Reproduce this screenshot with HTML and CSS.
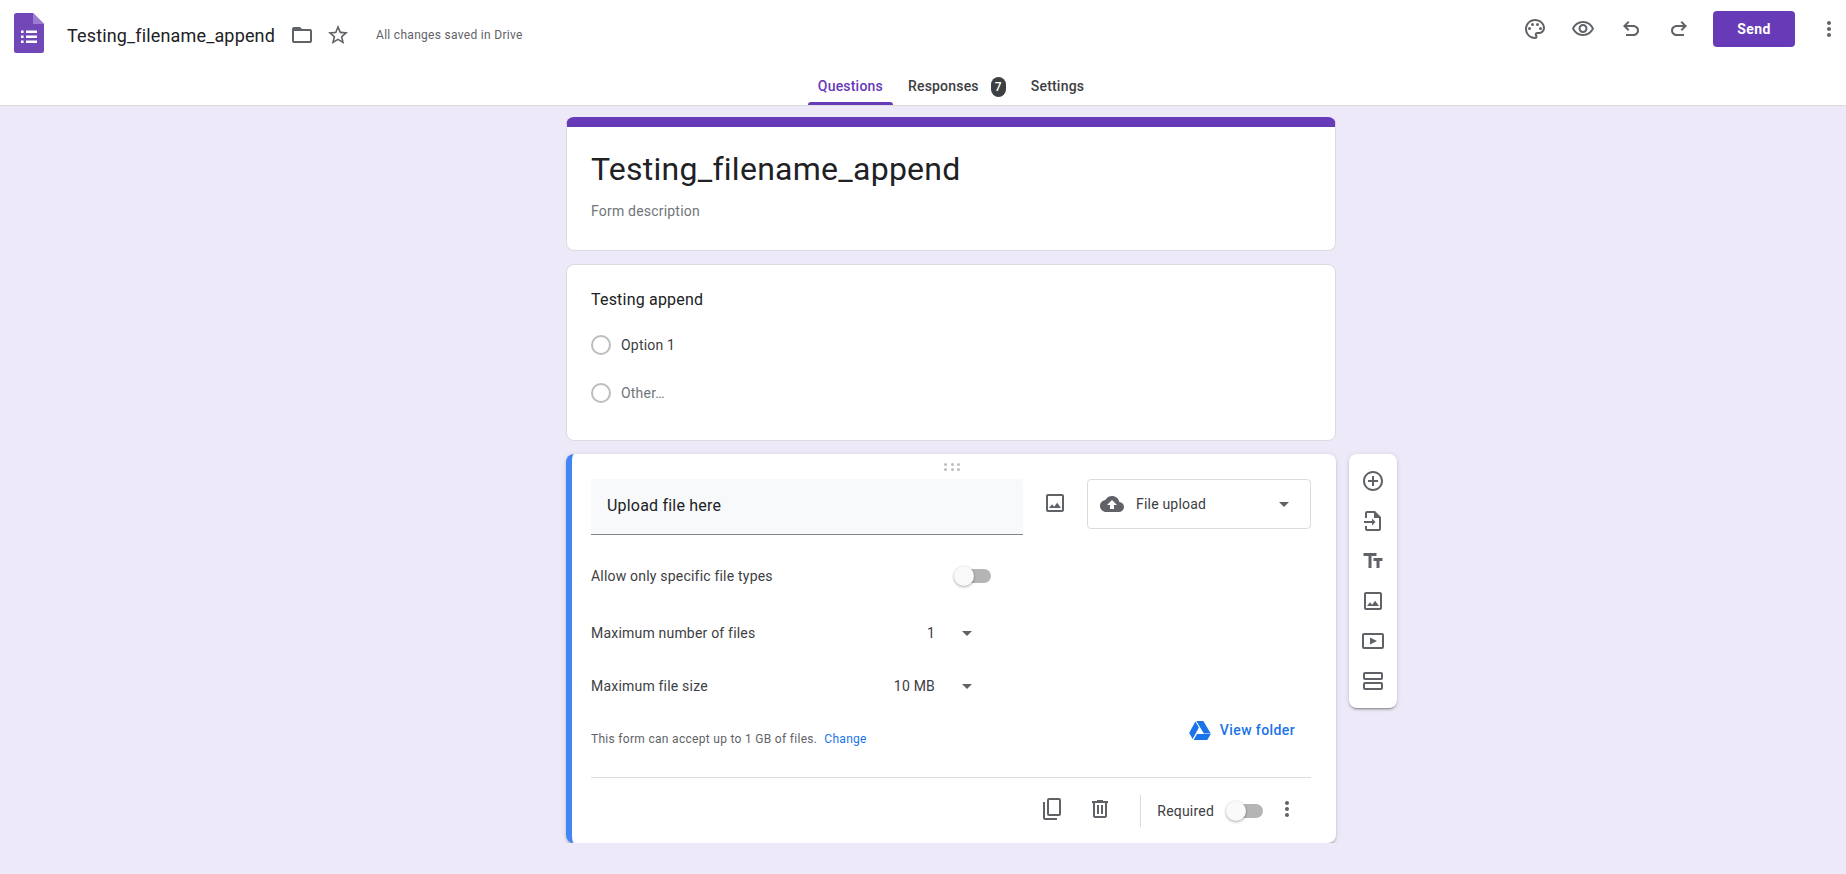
FILE: index.html
```html
<!DOCTYPE html>
<html lang="en">
<head>
    <meta charset="UTF-8">
    <title>Testing_filename_append - Google Forms</title>
    <link rel="stylesheet" href="styles.css">
</head>
<body>

<svg class="defs" width="0" height="0">
    <symbol id="i-image" viewBox="0 0 24 24"><path d="M19 5v14H5V5h14m0-2H5c-1.1 0-2 .9-2 2v14c0 1.1.9 2 2 2h14c1.1 0 2-.9 2-2V5c0-1.1-.9-2-2-2zm-4.86 8.86l-3 3.87L9 13.14 6 17h12l-3.86-5.14z"/></symbol>
    <symbol id="i-more" viewBox="0 0 24 24"><path d="M12 8c1.1 0 2-.9 2-2s-.9-2-2-2-2 .9-2 2 .9 2 2 2zm0 2c-1.1 0-2 .9-2 2s.9 2 2 2 2-.9 2-2-.9-2-2-2zm0 6c-1.1 0-2 .9-2 2s.9 2 2 2 2-.9 2-2-.9-2-2-2z"/></symbol>
    <symbol id="i-undo" viewBox="0 0 24 24"><path d="M7 19v-2h7.1c1.05 0 1.96-.33 2.74-1 .77-.67 1.16-1.5 1.16-2.5s-.39-1.83-1.16-2.5c-.78-.67-1.69-1-2.74-1H7.8l2.6 2.6L9 14 4 9l5-5 1.4 1.4L7.8 8h6.3c1.62 0 3 .53 4.16 1.58C19.42 10.63 20 11.94 20 13.5s-.58 2.87-1.74 3.93C17.1 18.48 15.72 19 14.1 19H7z"/></symbol>
</svg>

<header class="topbar">
    <div class="topbar-row">
        <div class="doc-info">
            <svg class="logo" viewBox="0 0 30 40">
                <path d="M2.500 0H19l11 11v26.500a2.500 2.500 0 0 1-2.500 2.500h-25A2.500 2.500 0 0 1 0 37.500v-35A2.500 2.500 0 0 1 2.500 0z" fill="#7248b9"/>
                <path d="M19 0l11 11H19z" fill="#9c7bd1"/>
                <path d="M7 17.500h2.600v2.600H7zM12 17.500h11v2.600H12zM7 22.500h2.600v2.600H7zM12 22.500h11v2.600H12zM7 27.500h2.600v2.600H7zM12 27.500h11v2.600H12z" fill="#fff"/>
            </svg>
            <span class="doc-title">Testing_filename_append</span>
            <svg class="icon folder-icon" viewBox="0 0 24 24"><path d="M20 6h-8l-2-2H4c-1.100 0-1.990.9-1.990 2L2 18c0 1.100.9 2 2 2h16c1.100 0 2-.9 2-2V8c0-1.100-.9-2-2-2zm0 12H4V8h16v10z"/></svg>
            <svg class="icon star-icon" viewBox="0 0 24 24"><path d="M22 9.240l-7.190-.62L12 2 9.190 8.630 2 9.240l5.460 4.730L5.820 21 12 17.270 18.180 21l-1.630-7.030L22 9.240zM12 15.400l-3.760 2.270 1-4.280-3.320-2.880 4.380-.38L12 6.100l1.710 4.040 4.380.38-3.320 2.880 1 4.280L12 15.400z"/></svg>
            <span class="saved">All changes saved in Drive</span>
        </div>
        <div class="actions">
            <span class="action">
                <svg class="icon" viewBox="0 0 24 24"><path d="M12 22C6.490 22 2 17.510 2 12S6.490 2 12 2s10 4.040 10 9c0 3.310-2.690 6-6 6h-1.770c-.28 0-.5.22-.5.5 0 .12.05.23.13.33.41.47.64 1.060.64 1.670A2.500 2.500 0 0 1 12 22zm0-18c-4.410 0-8 3.590-8 8s3.590 8 8 8c.28 0 .5-.22.5-.5a.54.54 0 0 0-.14-.35c-.41-.46-.63-1.050-.63-1.650a2.500 2.500 0 0 1 2.500-2.500H16c2.210 0 4-1.790 4-4 0-3.860-3.590-7-8-7z"/><circle cx="6.500" cy="11.500" r="1.500"/><circle cx="9.500" cy="7.500" r="1.500"/><circle cx="14.500" cy="7.500" r="1.500"/><circle cx="17.500" cy="11.500" r="1.500"/></svg>
            </span>
            <span class="action">
                <svg class="icon" viewBox="0 0 24 24"><path d="M12 6c3.790 0 7.170 2.130 8.820 5.500C19.170 14.870 15.790 17 12 17s-7.170-2.130-8.820-5.500C4.830 8.130 8.210 6 12 6m0-2C7 4 2.730 7.110 1 11.500 2.730 15.890 7 19 12 19s9.270-3.110 11-7.500C21.270 7.110 17 4 12 4zm0 5c1.380 0 2.500 1.120 2.500 2.500S13.380 14 12 14s-2.500-1.120-2.500-2.500S10.620 9 12 9m0-2c-2.480 0-4.500 2.020-4.500 4.500S9.520 16 12 16s4.500-2.020 4.500-4.500S14.480 7 12 7z"/></svg>
            </span>
            <span class="action"><svg class="icon"><use href="#i-undo"/></svg></span>
            <span class="action"><svg class="icon flip"><use href="#i-undo"/></svg></span>
            <button class="send-btn">Send</button>
            <span class="action-more"><svg class="icon"><use href="#i-more"/></svg></span>
        </div>
    </div>
    <nav class="tabs">
        <a class="tab active">Questions</a>
        <a class="tab">Responses<span class="badge">7</span></a>
        <a class="tab">Settings</a>
    </nav>
</header>

<main class="main">
    <div class="form-column">

        <section class="card form-head">
            <h1 class="form-title">Testing_filename_append</h1>
            <p class="form-desc">Form description</p>
        </section>

        <section class="card question">
            <h2 class="question-title">Testing append</h2>
            <div class="option"><span class="radio"></span>Option 1</div>
            <div class="option other"><span class="radio"></span>Other…</div>
        </section>

        <div class="active-wrap">
            <section class="card upload-card">
                <div class="drag-handle">
                    <i></i><i></i><i></i><i></i><i></i><i></i>
                </div>

                <div class="title-row">
                    <div class="title-input">Upload file here</div>
                    <svg class="icon image-btn"><use href="#i-image"/></svg>
                    <div class="type-select">
                        <svg class="icon" viewBox="0 0 24 24"><path d="M19.350 10.040C18.670 6.590 15.640 4 12 4 9.110 4 6.600 5.640 5.350 8.040 2.340 8.360 0 10.910 0 14c0 3.310 2.690 6 6 6h13c2.760 0 5-2.240 5-5 0-2.640-2.050-4.780-4.650-4.960zM14 13v4h-4v-4H7l5-5 5 5h-3z"/></svg>
                        <span class="type-label">File upload</span>
                        <span class="caret"></span>
                    </div>
                </div>

                <div class="setting toggle-setting">
                    <span>Allow only specific file types</span>
                    <span class="toggle"></span>
                </div>
                <div class="setting files-setting">
                    <span>Maximum number of files</span>
                    <span class="setting-value">1<span class="caret"></span></span>
                </div>
                <div class="setting size-setting">
                    <span>Maximum file size</span>
                    <span class="setting-value">10 MB<span class="caret"></span></span>
                </div>

                <div class="note-row">
                    <p class="note">This form can accept up to 1 GB of files.<a class="link">Change</a></p>
                    <a class="view-folder">
                        <svg class="drive" viewBox="0 0 24 21">
                            <path d="M7.900 0h7.800l8.200 13.800h-7.700zM6.900.6l3.900 6.700L3.900 19.900 0 13.300zM8.700 14.500h15.200L20 21H4.900z"/>
                        </svg>
                        View folder
                    </a>
                </div>

                <div class="card-footer">
                    <svg class="icon foot-icon" viewBox="0 0 24 24"><path d="M9 1h10a2 2 0 0 1 2 2v14a2 2 0 0 1-2 2H9a2 2 0 0 1-2-2V3a2 2 0 0 1 2-2zm0 2v14h10V3zM3 5h2v16h12v2H5a2 2 0 0 1-2-2z"/></svg>
                    <svg class="icon foot-icon delete" viewBox="0 0 24 24"><path d="M15 4V3H9v1H4v2h1v13c0 1.100.9 2 2 2h10c1.100 0 2-.9 2-2V6h1V4h-5zm2 15H7V6h10v13zM9 8h2v9H9zm4 0h2v9h-2z"/></svg>
                    <span class="foot-sep"></span>
                    <span class="required">Required</span>
                    <span class="toggle"></span>
                    <svg class="icon foot-icon more"><use href="#i-more"/></svg>
                </div>
            </section>

            <aside class="side-toolbar">
                <span class="tool"><svg class="icon" viewBox="0 0 24 24"><path d="M13 7h-2v4H7v2h4v4h2v-4h4v-2h-4V7zm-1-5C6.480 2 2 6.480 2 12s4.480 10 10 10 10-4.480 10-10S17.520 2 12 2zm0 18c-4.410 0-8-3.590-8-8s3.590-8 8-8 8 3.590 8 8-3.590 8-8 8z"/></svg></span>
                <span class="tool"><svg class="icon" viewBox="0 0 24 24"><path d="M14 2H6a2 2 0 0 0-2 2v5h2V4h7v5h5v11H6v-3H4v3a2 2 0 0 0 2 2h12a2 2 0 0 0 2-2V8zM3 12v2h8v2.500l3.500-3.500L11 9.500V12z"/></svg></span>
                <span class="tool"><svg class="icon" viewBox="0 0 24 24"><path d="M2.500 4v3h5v12h3V7h5V4h-13zm19 5h-9v3h3v7h3v-7h3V9z"/></svg></span>
                <span class="tool"><svg class="icon"><use href="#i-image"/></svg></span>
                <span class="tool"><svg class="icon" viewBox="0 0 24 24"><path d="M3 4h18a2 2 0 0 1 2 2v12a2 2 0 0 1-2 2H3a2 2 0 0 1-2-2V6a2 2 0 0 1 2-2zm0 2v12h18V6zm6 2.500l7 3.500-7 3.500z"/></svg></span>
                <span class="tool"><svg class="icon" viewBox="0 0 24 24"><path d="M4 3h16a2 2 0 0 1 2 2v4a2 2 0 0 1-2 2H4a2 2 0 0 1-2-2V5a2 2 0 0 1 2-2zm0 2v4h16V5zM4 13h16a2 2 0 0 1 2 2v4a2 2 0 0 1-2 2H4a2 2 0 0 1-2-2v-4a2 2 0 0 1 2-2zm0 2v4h16v-4z"/></svg></span>
            </aside>
        </div>

    </div>
</main>

</body>
</html>
```

FILE: styles.css
```css
/* Base */
body {
    margin: 0;
    background-color: #ede9f8;
    font-family: Roboto, sans-serif;
    font-size: 14px;
    letter-spacing: 0.2px;
    color: #202124;
}

* {
    box-sizing: border-box;
}

.defs {
    display: block;
    height: 0;
}

.icon {
    display: block;
    width: 24px;
    height: 24px;
    flex-shrink: 0;
    fill: #5f6368;
}

.flip {
    transform: scaleX(-1);
}

/* Header */
.topbar {
    height: 106px;
    background-color: #fff;
    border-bottom: 1px solid #dadce0;
}

.topbar-row {
    display: flex;
    justify-content: space-between;
    height: 58px;
}

.doc-info {
    display: flex;
    align-items: center;
    height: 58px;
    padding: 12px 0 0 14px;
}

.logo {
    width: 30px;
    height: 40px;
    margin: 0 23px 4px 0;
}

.doc-title {
    font-size: 18px;
    letter-spacing: 0.15px;
    width: 207px;
    white-space: nowrap;
}

.folder-icon {
    margin-left: 16px;
}

.star-icon {
    margin-left: 12px;
}

.saved {
    margin-left: 26px;
    font-size: 12px;
    letter-spacing: 0.3px;
    color: #5f6368;
}

.actions {
    display: flex;
    align-items: center;
    height: 36px;
    margin-top: 11px;
}

.action {
    display: flex;
    justify-content: center;
    width: 48px;
}

.send-btn {
    width: 82px;
    height: 36px;
    margin: 0 22px 0 10px;
    border: none;
    border-radius: 4px;
    background-color: #673ab7;
    color: #fff;
    font-family: Roboto, sans-serif;
    font-size: 14px;
    font-weight: 700;
    letter-spacing: 0.4px;
}

.action-more {
    width: 24px;
    margin-right: 5px;
}

/* Tabs */
.tabs {
    display: flex;
    justify-content: center;
    gap: 5px;
    height: 47px;
    padding-left: 56px;
}

.tab {
    position: relative;
    display: flex;
    height: 47px;
    padding: 16px 10px 0;
    line-height: 24px;
    font-weight: 500;
    color: #3c4043;
}

.tab.active {
    color: #673ab7;
}

.tab.active::after {
    content: "";
    position: absolute;
    left: 0;
    right: 0;
    bottom: 0;
    height: 3px;
    border-radius: 3px 3px 0 0;
    background-color: #673ab7;
}

.badge {
    width: 15px;
    height: 20px;
    margin: 3px 0 0 12px;
    border-radius: 8px;
    background-color: #3c4043;
    color: #fff;
    font-size: 12px;
    letter-spacing: 0;
    line-height: 20px;
    text-align: center;
}

/* Cards */
.main {
    display: flex;
    justify-content: center;
    padding: 11px 0 0 56px;
}

.form-column {
    display: flex;
    flex-direction: column;
    gap: 13px;
    width: 770px;
}

.card {
    background-color: #fff;
    border: 1px solid #dadce0;
    border-radius: 8px;
}

.form-head {
    height: 134px;
    padding: 22px 24px 0;
    border-top: 10px solid #673ab7;
}

.form-title {
    margin: 0;
    font-size: 32px;
    font-weight: 400;
    letter-spacing: 0.26px;
    line-height: 40px;
}

.form-desc {
    margin: 12px 0 0;
    line-height: 20px;
    color: #70757a;
}

.question {
    height: 177px;
    padding: 23px 24px 0;
}

.question-title {
    margin: 0 0 23px;
    font-size: 16px;
    font-weight: 400;
    line-height: 24px;
}

.option {
    display: flex;
    align-items: center;
    gap: 10px;
    height: 20px;
    margin-bottom: 28px;
    color: #3c4043;
}

.other {
    color: #70757a;
}

.radio {
    width: 20px;
    height: 20px;
    border: 2px solid #bdbdbd;
    border-radius: 50%;
}

/* Active question */
.active-wrap {
    position: relative;
}

.upload-card {
    position: relative;
    height: 389px;
    padding: 25px 25px 0 19px;
    border: none;
    border-left: 6px solid #4285f4;
    box-shadow: 0 3px 1px -2px rgba(0, 0, 0, 0.2), 0 2px 2px 0 rgba(0, 0, 0, 0.14), 0 1px 5px 0 rgba(0, 0, 0, 0.12);
}

.drag-handle {
    position: absolute;
    top: 9px;
    left: 372px;
    display: grid;
    grid-template-columns: repeat(3, 3px);
    gap: 2px 3.5px;
}

.drag-handle i {
    width: 3px;
    height: 3px;
    border-radius: 50%;
    background-color: #bdbdbd;
}

.title-row {
    display: flex;
    align-items: flex-start;
}

.title-input {
    width: 432px;
    height: 56px;
    padding-left: 16px;
    border-bottom: 1px solid #80868b;
    border-radius: 4px 4px 0 0;
    background-color: #f8f9fa;
    font-size: 16px;
    line-height: 54px;
}

.image-btn {
    margin: 12px 20px 0;
}

.type-select {
    display: flex;
    align-items: center;
    width: 224px;
    height: 50px;
    padding: 0 21px 0 12px;
    border: 1px solid #dadce0;
    border-radius: 4px;
}

.type-label {
    flex: 1;
    margin-left: 12px;
    color: #3c4043;
}

.caret {
    display: inline-block;
    width: 0;
    height: 0;
    border-style: solid;
    border-width: 5px 5px 0;
    border-color: #5f6368 transparent transparent;
}

.setting {
    display: flex;
    justify-content: space-between;
    align-items: center;
    height: 24px;
    color: #3c4043;
}

.toggle-setting {
    width: 400px;
    margin-top: 29px;
}

.files-setting {
    width: 381px;
    margin-top: 33px;
}

.size-setting {
    width: 381px;
    margin-top: 29px;
}

.setting-value {
    display: flex;
    align-items: center;
    gap: 27px;
    color: #3c4043;
}

.toggle {
    position: relative;
    display: block;
    width: 37px;
    height: 14px;
    padding-left: 9px;
    background-clip: content-box;
    background-color: #b5b5b5;
    border-radius: 0 7px 7px 0;
}

.toggle::before {
    content: "";
    position: absolute;
    left: 0;
    top: -3px;
    width: 20px;
    height: 20px;
    border-radius: 50%;
    background-color: #fafafa;
    box-shadow: 0 1px 3px rgba(0, 0, 0, 0.35);
}

.note-row {
    display: flex;
    justify-content: space-between;
    align-items: flex-start;
    margin-top: 20px;
    padding-right: 16px;
}

.note {
    margin: 13px 0 0;
    font-size: 12px;
    letter-spacing: 0.3px;
    line-height: 16px;
    color: #5f6368;
}

.link {
    margin-left: 7px;
    color: #1a73e8;
}

.view-folder {
    display: flex;
    align-items: center;
    gap: 9px;
    height: 24px;
    font-weight: 500;
    letter-spacing: 0.4px;
    color: #1a73e8;
}

.drive {
    width: 22px;
    height: 19px;
    fill: #1a73e8;
}

.card-footer {
    display: flex;
    justify-content: flex-end;
    align-items: center;
    height: 65px;
    margin-top: 30px;
    padding: 1px 12px 0 0;
    border-top: 1px solid #dadce0;
}

.foot-icon {
    margin-bottom: 4px;
}

.delete {
    margin-left: 24px;
}

.foot-sep {
    width: 1px;
    height: 32px;
    margin: 0 16px 0 28px;
    background-color: #dadce0;
}

.required {
    margin-right: 12px;
    color: #3c4043;
}

.more {
    margin-left: 12px;
}

/* Floating toolbar */
.side-toolbar {
    position: absolute;
    top: 0;
    left: 783px;
    display: flex;
    flex-direction: column;
    width: 48px;
    padding: 7px 0;
    border-radius: 8px;
    background-color: #fff;
    box-shadow: 0 3px 1px -2px rgba(0, 0, 0, 0.2), 0 2px 2px 0 rgba(0, 0, 0, 0.14), 0 1px 5px 0 rgba(0, 0, 0, 0.12);
}

.tool {
    display: flex;
    justify-content: center;
    align-items: center;
    height: 40px;
}
```
